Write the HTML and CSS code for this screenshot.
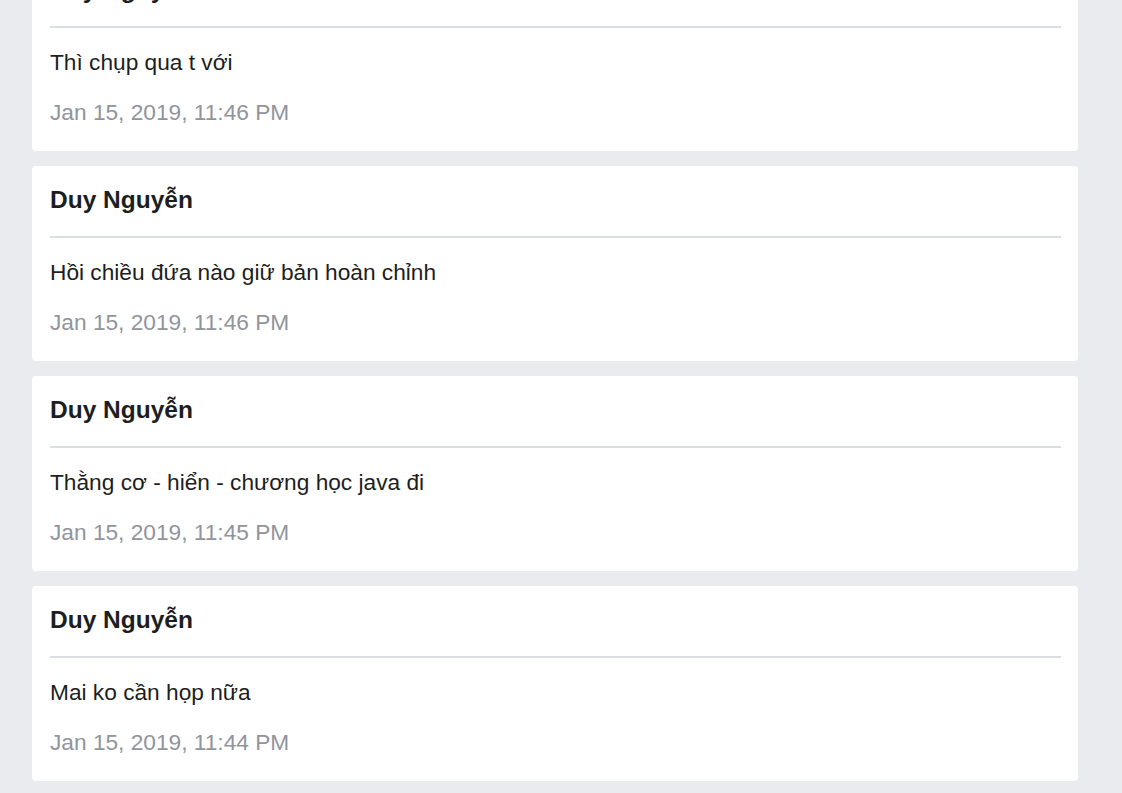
FILE: index.html
```html
<!DOCTYPE html>
<html lang="vi">
<head>
<meta charset="utf-8">
<title>Messages</title>
<link rel="stylesheet" href="styles.css">
</head>
<body>
<div class="list">
  <div class="card">
    <div class="card-head"><span class="name">Duy Nguyễn</span></div>
    <p class="msg">Thì chụp qua t với</p>
    <p class="date">Jan 15, 2019, 11:46 PM</p>
  </div>
  <div class="card">
    <div class="card-head"><span class="name">Duy Nguyễn</span></div>
    <p class="msg">Hồi chiều đứa nào giữ bản hoàn chỉnh</p>
    <p class="date">Jan 15, 2019, 11:46 PM</p>
  </div>
  <div class="card">
    <div class="card-head"><span class="name">Duy Nguyễn</span></div>
    <p class="msg">Thằng cơ - hiển - chương học java đi</p>
    <p class="date">Jan 15, 2019, 11:45 PM</p>
  </div>
  <div class="card">
    <div class="card-head"><span class="name">Duy Nguyễn</span></div>
    <p class="msg">Mai ko cần họp nữa</p>
    <p class="date">Jan 15, 2019, 11:44 PM</p>
  </div>
</div>
</body>
</html>
```
FILE: styles.css
```css
html, body {
  margin: 0;
  padding: 0;
  background: #e9ebee;
  height: 100%;
  overflow: hidden;
}
body {
  font-family: "Liberation Sans", Arial, sans-serif;
  color: #1c1e21;
}
.list {
  display: flex;
  flex-direction: column;
  gap: 15px;
  width: 1046px;
  margin: -44px 0 0 32px;
}
.card {
  background: #ffffff;
  border-radius: 4px;
  padding: 0 17px 23px 18px;
  height: 195px;
  box-sizing: border-box;
}
.card-head {
  padding: 19px 0 21px;
  border-bottom: 2px solid #dadde1;
}
.name {
  display: block;
  font-size: 24.5px;
  font-weight: bold;
  line-height: 30px;
}
.msg {
  margin: 19px 0 0;
  font-size: 22.7px;
  line-height: 30px;
}
.date {
  margin: 20px 0 0;
  font-size: 22.7px;
  line-height: 30px;
  color: #90949c;
}
```
